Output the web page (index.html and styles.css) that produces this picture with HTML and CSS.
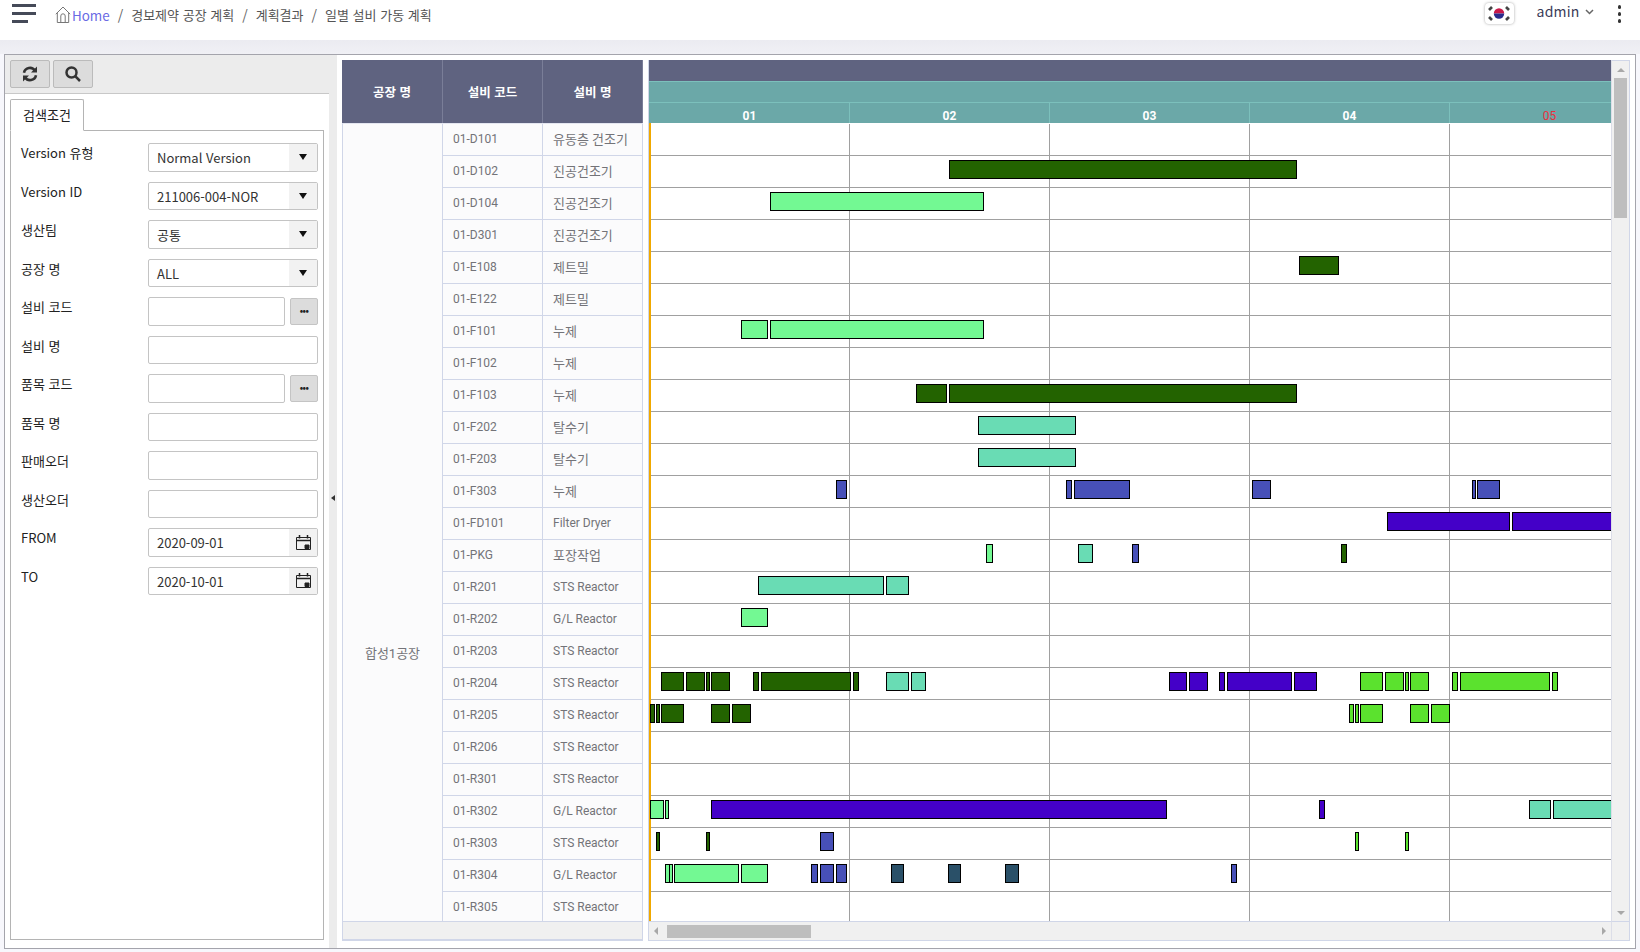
FILE: index.html
```html
<!DOCTYPE html>
<html lang="ko">
<head>
    <meta charset="UTF-8">
    <title>일별 설비 가동 계획</title>
    <link rel="stylesheet" href="styles.css">
</head>
<body>
<div class="page">
    <!-- 상단 바 -->
    <header class="topbar">
        <div class="burger"><span></span><span></span><span class="short"></span></div>
        <nav class="crumbs">
            <svg class="home-icon" width="16" height="17" viewBox="0 0 16 17" fill="none" stroke="#777" stroke-width="1"><path d="M.8 8.2 8 1l7.2 7.2"/><path d="M2.3 6.8v9.7h11.4V6.8"/><path d="M5.8 16.5V10a2.2 2.2 0 0 1 4.400 0v6.500"/></svg>
            <a class="home-link">Home</a>
            <span class="sep">/</span><span>경보제약 공장 계획</span>
            <span class="sep">/</span><span>계획결과</span>
            <span class="sep">/</span><span>일별 설비 가동 계획</span>
        </nav>
        <div class="top-right">
            <div class="flag">
                <svg width="24" height="17" viewBox="0 0 24 17">
                    <path d="M6.800 8.500a5.200 5.200 0 0 1 10.400 0z" fill="#c8184a"/>
                    <path d="M17.200 8.500a5.200 5.200 0 0 1-10.400 0z" fill="#2a2a8c"/>
                    <g fill="none" stroke="#444" stroke-width="2.600"><path d="M2 5 5 2"/><path d="M19 2l3 3"/><path d="M2 12l3 3"/><path d="M19 15l3-3"/></g>
                </svg>
            </div>
            <span class="user">admin</span>
            <svg class="chevron" width="9" height="6" viewBox="0 0 9 6" fill="none" stroke="#666" stroke-width="1.500"><path d="M1 1l3.500 3.500L8 1"/></svg>
            <div class="dots"><i></i><i></i><i></i></div>
        </div>
    </header>

    <main class="main">
        <!-- 검색 패널 -->
        <aside class="side">
            <div class="toolbar">
                <button class="tool-btn">
                    <svg width="16" height="16" viewBox="0 0 16 16" fill="none" stroke="#333" stroke-width="2.600"><path d="M2 6.800A6 6 0 0 1 13 4.800"/><path d="M14 9.200A6 6 0 0 1 3 11.200"/><path d="M15 .5v6h-6z" fill="#333" stroke="none"/><path d="M1 15.500v-6h6z" fill="#333" stroke="none"/></svg>
                </button>
                <button class="tool-btn">
                    <svg width="16" height="16" viewBox="0 0 16 16" fill="none" stroke="#333" stroke-width="2.500"><circle cx="6.500" cy="6.500" r="5"/><path d="M10.200 10.200 15 15"/></svg>
                </button>
            </div>
            <div class="tab-area">
                <div class="tab">검색조건</div>
                <div class="tab-panel">
                    <form class="search-form">
                        <label>Version 유형</label>
                        <div class="field"><span class="value">Normal Version</span><span class="addon"><i class="caret"></i></span></div>
                        <label>Version ID</label>
                        <div class="field"><span class="value">211006-004-NOR</span><span class="addon"><i class="caret"></i></span></div>
                        <label>생산팀</label>
                        <div class="field"><span class="value">공통</span><span class="addon"><i class="caret"></i></span></div>
                        <label>공장 명</label>
                        <div class="field"><span class="value">ALL</span><span class="addon"><i class="caret"></i></span></div>
                        <label>설비 코드</label>
                        <div class="field-pair"><div class="field"></div><span class="more-btn">•••</span></div>
                        <label>설비 명</label>
                        <div class="field"></div>
                        <label>품목 코드</label>
                        <div class="field-pair"><div class="field"></div><span class="more-btn">•••</span></div>
                        <label>품목 명</label>
                        <div class="field"></div>
                        <label>판매오더</label>
                        <div class="field"></div>
                        <label>생산오더</label>
                        <div class="field"></div>
                        <label>FROM</label>
                        <div class="field"><span class="value">2020-09-01</span><span class="addon">
                            <svg width="15" height="15" viewBox="0 0 15 15" fill="none" stroke="#222"><path d="M.5 2.500h14v12H.5z"/><path d="M.5 5.500h14" stroke-width="1.500"/><path d="M3.500 0v3.500M11.500 0v3.500" stroke-width="1.500"/><path d="M9 10h4v3.500H9z" fill="#222"/></svg>
                        </span></div>
                        <label>TO</label>
                        <div class="field"><span class="value">2020-10-01</span><span class="addon">
                            <svg width="15" height="15" viewBox="0 0 15 15" fill="none" stroke="#222"><path d="M.5 2.500h14v12H.5z"/><path d="M.5 5.500h14" stroke-width="1.500"/><path d="M3.500 0v3.500M11.500 0v3.500" stroke-width="1.500"/><path d="M9 10h4v3.500H9z" fill="#222"/></svg>
                        </span></div>
                    </form>
                </div>
            </div>
        </aside>
        <div class="splitter"><i></i></div>

        <!-- 그리드 + 간트 -->
        <section class="content">
            <div class="equip-table">
                <div class="equip-head"><div>공장 명</div><div>설비 코드</div><div>설비 명</div></div>
                <div class="equip-body">
                    <div class="plant-cell">합성1공장</div>
                    <div class="equip-rows">
                        <div class="equip-row"><span>01-D101</span><span class="ko">유동층 건조기</span></div>
                        <div class="equip-row"><span>01-D102</span><span class="ko">진공건조기</span></div>
                        <div class="equip-row"><span>01-D104</span><span class="ko">진공건조기</span></div>
                        <div class="equip-row"><span>01-D301</span><span class="ko">진공건조기</span></div>
                        <div class="equip-row"><span>01-E108</span><span class="ko">제트밀</span></div>
                        <div class="equip-row"><span>01-E122</span><span class="ko">제트밀</span></div>
                        <div class="equip-row"><span>01-F101</span><span class="ko">누제</span></div>
                        <div class="equip-row"><span>01-F102</span><span class="ko">누제</span></div>
                        <div class="equip-row"><span>01-F103</span><span class="ko">누제</span></div>
                        <div class="equip-row"><span>01-F202</span><span class="ko">탈수기</span></div>
                        <div class="equip-row"><span>01-F203</span><span class="ko">탈수기</span></div>
                        <div class="equip-row"><span>01-F303</span><span class="ko">누제</span></div>
                        <div class="equip-row"><span>01-FD101</span><span>Filter Dryer</span></div>
                        <div class="equip-row"><span>01-PKG</span><span class="ko">포장작업</span></div>
                        <div class="equip-row"><span>01-R201</span><span>STS Reactor</span></div>
                        <div class="equip-row"><span>01-R202</span><span>G/L Reactor</span></div>
                        <div class="equip-row"><span>01-R203</span><span>STS Reactor</span></div>
                        <div class="equip-row"><span>01-R204</span><span>STS Reactor</span></div>
                        <div class="equip-row"><span>01-R205</span><span>STS Reactor</span></div>
                        <div class="equip-row"><span>01-R206</span><span>STS Reactor</span></div>
                        <div class="equip-row"><span>01-R301</span><span>STS Reactor</span></div>
                        <div class="equip-row"><span>01-R302</span><span>G/L Reactor</span></div>
                        <div class="equip-row"><span>01-R303</span><span>STS Reactor</span></div>
                        <div class="equip-row"><span>01-R304</span><span>G/L Reactor</span></div>
                        <div class="equip-row"><span>01-R305</span><span>STS Reactor</span></div>
                    </div>
                </div>
                <div class="left-scroll"></div>
            </div>

            <div class="gantt">
                <div class="gantt-view">
                    <div class="gantt-head">
                        <div class="head-band"></div>
                        <div class="head-teal"></div>
                        <div class="head-days">
                            <div>01</div><div>02</div><div>03</div><div>04</div><div class="holiday">05</div>
                        </div>
                    </div>
                    <div class="gantt-body">
                        <div class="today-line"></div>
                        <div class="g-row"></div>
                        <div class="g-row">
                            <i class="bar d" style="left:300px;width:348px"></i>
                        </div>
                        <div class="g-row">
                            <i class="bar l" style="left:121px;width:214px"></i>
                        </div>
                        <div class="g-row"></div>
                        <div class="g-row">
                            <i class="bar d" style="left:650px;width:40px"></i>
                        </div>
                        <div class="g-row"></div>
                        <div class="g-row">
                            <i class="bar l" style="left:92px;width:27px"></i>
                            <i class="bar l" style="left:121px;width:214px"></i>
                        </div>
                        <div class="g-row"></div>
                        <div class="g-row">
                            <i class="bar d" style="left:267px;width:31px"></i>
                            <i class="bar d" style="left:300px;width:348px"></i>
                        </div>
                        <div class="g-row">
                            <i class="bar t" style="left:329px;width:98px"></i>
                        </div>
                        <div class="g-row">
                            <i class="bar t" style="left:329px;width:98px"></i>
                        </div>
                        <div class="g-row">
                            <i class="bar b" style="left:187px;width:11px"></i>
                            <i class="bar b" style="left:417px;width:6px"></i>
                            <i class="bar b" style="left:425px;width:56px"></i>
                            <i class="bar b" style="left:603px;width:19px"></i>
                            <i class="bar b" style="left:823px;width:4px"></i>
                            <i class="bar b" style="left:828px;width:23px"></i>
                        </div>
                        <div class="g-row">
                            <i class="bar v" style="left:738px;width:123px"></i>
                            <i class="bar v" style="left:863px;width:160px"></i>
                        </div>
                        <div class="g-row">
                            <i class="bar l" style="left:337px;width:7px"></i>
                            <i class="bar t" style="left:429px;width:15px"></i>
                            <i class="bar b" style="left:483px;width:7px"></i>
                            <i class="bar d" style="left:692px;width:6px"></i>
                        </div>
                        <div class="g-row">
                            <i class="bar t" style="left:109px;width:126px"></i>
                            <i class="bar t" style="left:237px;width:23px"></i>
                        </div>
                        <div class="g-row">
                            <i class="bar l" style="left:92px;width:27px"></i>
                        </div>
                        <div class="g-row"></div>
                        <div class="g-row">
                            <i class="bar d" style="left:12px;width:23px"></i>
                            <i class="bar d" style="left:37px;width:19px"></i>
                            <i class="bar d" style="left:57px;width:4px"></i>
                            <i class="bar d" style="left:62px;width:19px"></i>
                            <i class="bar d" style="left:104px;width:6px"></i>
                            <i class="bar d" style="left:112px;width:90px"></i>
                            <i class="bar d" style="left:204px;width:6px"></i>
                            <i class="bar t" style="left:237px;width:23px"></i>
                            <i class="bar t" style="left:262px;width:15px"></i>
                            <i class="bar v" style="left:520px;width:18px"></i>
                            <i class="bar v" style="left:540px;width:19px"></i>
                            <i class="bar v" style="left:570px;width:6px"></i>
                            <i class="bar v" style="left:578px;width:65px"></i>
                            <i class="bar v" style="left:645px;width:23px"></i>
                            <i class="bar g" style="left:711px;width:23px"></i>
                            <i class="bar g" style="left:736px;width:19px"></i>
                            <i class="bar g" style="left:756px;width:4px"></i>
                            <i class="bar g" style="left:761px;width:19px"></i>
                            <i class="bar g" style="left:803px;width:6px"></i>
                            <i class="bar g" style="left:811px;width:90px"></i>
                            <i class="bar g" style="left:903px;width:6px"></i>
                        </div>
                        <div class="g-row">
                            <i class="bar d" style="left:1px;width:5px"></i>
                            <i class="bar d" style="left:7px;width:4px"></i>
                            <i class="bar d" style="left:12px;width:23px"></i>
                            <i class="bar d" style="left:62px;width:19px"></i>
                            <i class="bar d" style="left:83px;width:19px"></i>
                            <i class="bar g" style="left:700px;width:5px"></i>
                            <i class="bar g" style="left:706px;width:4px"></i>
                            <i class="bar g" style="left:711px;width:23px"></i>
                            <i class="bar g" style="left:761px;width:19px"></i>
                            <i class="bar g" style="left:782px;width:19px"></i>
                        </div>
                        <div class="g-row"></div>
                        <div class="g-row"></div>
                        <div class="g-row">
                            <i class="bar l" style="left:1px;width:14px"></i>
                            <i class="bar l" style="left:16px;width:4px"></i>
                            <i class="bar v" style="left:62px;width:456px"></i>
                            <i class="bar v" style="left:670px;width:6px"></i>
                            <i class="bar t" style="left:880px;width:22px"></i>
                            <i class="bar t" style="left:904px;width:100px"></i>
                        </div>
                        <div class="g-row">
                            <i class="bar d" style="left:7px;width:4px"></i>
                            <i class="bar d" style="left:57px;width:4px"></i>
                            <i class="bar b" style="left:171px;width:14px"></i>
                            <i class="bar g" style="left:706px;width:4px"></i>
                            <i class="bar g" style="left:756px;width:4px"></i>
                        </div>
                        <div class="g-row">
                            <i class="bar l" style="left:16px;width:5px"></i>
                            <i class="bar l" style="left:20px;width:4px"></i>
                            <i class="bar l" style="left:25px;width:65px"></i>
                            <i class="bar l" style="left:92px;width:27px"></i>
                            <i class="bar b" style="left:162px;width:7px"></i>
                            <i class="bar b" style="left:171px;width:14px"></i>
                            <i class="bar b" style="left:187px;width:11px"></i>
                            <i class="bar s" style="left:242px;width:13px"></i>
                            <i class="bar s" style="left:299px;width:13px"></i>
                            <i class="bar s" style="left:356px;width:14px"></i>
                            <i class="bar b" style="left:582px;width:6px"></i>
                        </div>
                        <div class="g-row"></div>
                    </div>
                </div>
                <div class="v-scroll">
                    <i class="arrow up"></i>
                    <div class="v-thumb"></div>
                    <i class="arrow down"></i>
                </div>
                <div class="h-scroll">
                    <i class="arrow left"></i>
                    <div class="h-thumb"></div>
                    <i class="arrow right"></i>
                </div>
                <div class="corner"></div>
            </div>
        </section>
    </main>
</div>
</body>
</html>
```

FILE: styles.css
```css
* {
    box-sizing: border-box;
}
body {
    margin: 0;
    font-family: "Noto Sans CJK KR", "Noto Sans", sans-serif;
    font-size: 13px;
    background-color: #f7f7fc;
    color: #333;
}
.page {
    display: flex;
    flex-direction: column;
    height: 952px;
    overflow: hidden;
    background: linear-gradient(#ebebf1 40px, #f0f0f5 54px, #f7f7fc 54px);
}

/* top bar */
.topbar {
    display: flex;
    align-items: flex-start;
    height: 40px;
    flex: none;
    background: white;
    padding-left: 12px;
    position: relative;
}
.burger {
    display: flex;
    flex-direction: column;
    gap: 5.5px;
    width: 24px;
    margin-top: 4px;
}
.burger span {
    display: block;
    height: 2.5px;
    background-color: #454a58;
}
.burger .short {
    width: 16px;
}
.crumbs {
    display: flex;
    align-items: center;
    height: 29px;
    margin-left: 19px;
    font-size: 13px;
    color: #555;
    white-space: nowrap;
}
.home-icon {
    margin-right: 1px;
}
.home-link {
    font-size: 13.4px;
    color: #6a6ae4;
}
.sep {
    margin: 0 8px;
    font-size: 14px;
    color: #666;
}
.top-right {
    display: flex;
    align-items: flex-start;
    margin-left: auto;
}
.flag {
    display: flex;
    align-items: center;
    justify-content: center;
    width: 29px;
    height: 21px;
    margin-top: 3px;
    background: white;
    border-radius: 4px;
    box-shadow: 0 0 3px rgba(0,0,0,0.35);
}
.user {
    margin-left: 23px;
    font-size: 14px;
    line-height: 22px;
    color: #3b3b58;
    letter-spacing: 0.2px;
}
.chevron {
    margin: 9px 0 0 5px;
}
.dots {
    display: flex;
    flex-direction: column;
    gap: 3.5px;
    margin: 5px 19px 0 24px;
}
.dots i {
    width: 3.5px;
    height: 3.5px;
    border-radius: 50%;
    background-color: #333;
}

/* layout */
.main {
    display: flex;
    height: 895px;
    margin: 14px 4px 3px 4px;
    border: 1px solid #a4a4ac;
    background: white;
}
.side {
    display: flex;
    flex-direction: column;
    width: 324px;
    flex: none;
}
.splitter {
    display: flex;
    align-items: center;
    justify-content: center;
    width: 8px;
    flex: none;
    background-color: #ececec;
    padding-bottom: 8px;
}
.splitter i {
    border: 3px solid transparent;
    border-right: 4px solid #333;
    border-left: 0;
}

/* search panel */
.toolbar {
    display: flex;
    gap: 3px;
    height: 39px;
    padding: 5px;
    background-color: #ececec;
    border-bottom: 1px solid #c8c8c8;
}
.tool-btn {
    display: flex;
    align-items: center;
    justify-content: center;
    width: 40px;
    height: 28px;
    padding: 0;
    background-color: #dcdcdc;
    border: 1px solid #bbb;
    border-radius: 2px;
}
.tab-area {
    flex: 1;
    display: flex;
    flex-direction: column;
    padding: 5px 5px 8px 5px;
}
.tab {
    width: 74px;
    height: 32px;
    margin-bottom: -1px;
    position: relative;
    line-height: 29px;
    text-align: center;
    color: #222;
    background: white;
    border: 1px solid #b4b4b4;
    border-bottom-color: white;
    border-radius: 2px 2px 0 0;
}
.tab-panel {
    flex: 1;
    border: 1px solid #b4b4b4;
    padding: 12px 5px 0 10px;
}
.search-form {
    display: grid;
    grid-template-columns: 127px 170px;
    grid-auto-rows: 38.5px;
}
.search-form label {
    line-height: 20px;
    color: #222;
}
.field {
    display: flex;
    align-items: stretch;
    height: 28.5px;
    background: white;
    border: 1px solid #c4c4c4;
    border-radius: 2px;
}
.value {
    flex: 1;
    padding-left: 8px;
    line-height: 27px;
    color: #333;
}
.addon {
    display: flex;
    align-items: center;
    justify-content: center;
    width: 28px;
    background-color: #f2f2f2;
}
.caret {
    border: 4px solid transparent;
    border-top: 6px solid #111;
    border-bottom: 0;
}
.field-pair {
    display: flex;
    gap: 5px;
}
.field-pair .field {
    flex: 1;
}
.more-btn {
    width: 28px;
    height: 27px;
    line-height: 23px;
    margin-top: 1px;
    text-align: center;
    font-size: 9px;
    font-weight: 700;
    letter-spacing: -0.5px;
    color: #222;
    background-color: #dcdcdc;
    border: 1px solid #c4c4c4;
    border-radius: 2px;
}

/* equipment table */
.content {
    flex: 1;
    display: flex;
    gap: 5px;
    padding: 5px 5px 7px 5px;
    min-width: 0;
}
.equip-table {
    display: flex;
    flex-direction: column;
    width: 301px;
    flex: none;
    border-bottom: 2px solid #d0d6e8;
}
.equip-head {
    display: flex;
    height: 63px;
    flex: none;
    background-color: #5f6380;
    color: white;
    font-weight: 700;
    font-size: 12.5px;
}
.equip-head div {
    width: 100px;
    padding-top: 1px;
    line-height: 62px;
    text-align: center;
    border-right: 1px solid #7a7e98;
}
.equip-head div:first-child {
    width: 101px;
}
.equip-body {
    flex: 1;
    display: flex;
    overflow: hidden;
    background-color: #fbfbfc;
    color: #737378;
    font-family: Roboto, "Noto Sans CJK KR", sans-serif;
    font-size: 12px;
    border-top: 1px solid #e4e6f0;
    border-left: 1px solid #d0d6e8;
}
.plant-cell {
    width: 100px;
    flex: none;
    padding-top: 519px;
    text-align: center;
    font-size: 13px;
    border-right: 1px solid #d0d6e8;
}
.equip-rows {
    flex: 1;
}
.equip-row {
    display: flex;
    height: 32px;
    line-height: 31px;
    border-bottom: 1px solid #d0d6e8;
}
.equip-row span {
    width: 100px;
    padding-left: 10px;
    border-right: 1px solid #d0d6e8;
    white-space: nowrap;
}
.equip-row .ko {
    font-size: 13px;
}
.left-scroll {
    height: 18px;
    flex: none;
    background-color: #f0f0f0;
    border-top: 1px solid #d0d6e8;
    border-left: 1px solid #d0d6e8;
    border-right: 1px solid #d0d6e8;
}

/* gantt */
.gantt {
    flex: 1;
    display: grid;
    grid-template-columns: 1fr 18px;
    grid-template-rows: 1fr 19px;
    min-width: 0;
    border-left: 1px solid #d0d6e8;
    border-bottom: 1px solid #d0d6e8;
    border-right: 1px solid #d0d6e8;
}
.gantt-view {
    display: flex;
    flex-direction: column;
    min-width: 0;
    overflow: hidden;
}
.gantt-head {
    flex: none;
    height: 63px;
    color: white;
    font-family: Roboto, sans-serif;
    font-weight: 700;
    font-size: 12px;
    background-color: #6ba8a8;
}
.head-band {
    height: 21px;
    background-color: #5f6380;
}
.head-teal {
    height: 21px;
    border-top: 1px solid #7cc0bc;
}
.head-days {
    display: flex;
    height: 21px;
    padding-left: 1px;
    border-top: 1px solid #7cc0bc;
}
.head-days div {
    width: 200px;
    flex: none;
    padding-top: 4px;
    line-height: 18px;
    text-align: center;
    border-right: 1px solid #7cc0bc;
}
.head-days .holiday {
    color: #ea2f3c;
    font-weight: 400;
}
.gantt-body {
    flex: 1;
    position: relative;
    overflow: hidden;
    padding-top: 1px;
    background: white;
}
.today-line {
    position: absolute;
    left: 0;
    top: 0;
    bottom: 0;
    width: 2px;
    z-index: 1;
    background-color: #f0a800;
}
.g-row {
    position: relative;
    height: 32px;
    border-bottom: 1px solid #a0a0a0;
    background-image: linear-gradient(to left, #a0a0a0 1px, transparent 1px);
    background-size: 200px 100%;
    background-position-x: 1px;
}
.bar {
    position: absolute;
    top: 4px;
    height: 19px;
    z-index: 2;
    border: 1px solid black;
}
.bar.d { background-color: #236300; }
.bar.l { background-color: #73f993; }
.bar.t { background-color: #69dcb4; }
.bar.b { background-color: #4750b8; }
.bar.v { background-color: #4400c8; }
.bar.g { background-color: #5be22e; }
.bar.s { background-color: #2a5068; }

/* scrollbars */
.v-scroll {
    grid-column: 2;
    grid-row: 1;
    display: flex;
    flex-direction: column;
    align-items: center;
    background-color: #f0f0f0;
    border-left: 1px solid #dcdee8;
    border-top: 1px solid #d0d6e8;
    padding-top: 7px;
}
.v-thumb {
    width: 13px;
    height: 140px;
    margin-top: 6px;
    background-color: #bebebe;
}
.h-scroll {
    grid-column: 1;
    grid-row: 2;
    display: flex;
    align-items: center;
    padding-left: 5px;
    padding-right: 5px;
    background-color: #f0f0f0;
    border-top: 1px solid #d0d6e8;
}
.h-thumb {
    width: 144px;
    height: 13px;
    margin-left: 9px;
    background-color: #bebebe;
}
.corner {
    grid-column: 2;
    grid-row: 2;
    background-color: #f0f0f0;
    border-top: 1px solid #d0d6e8;
    border-left: 1px solid #dcdee8;
}
.arrow {
    display: block;
    width: 0;
    height: 0;
    border: 4px solid transparent;
}
.arrow.up {
    border-top: 0;
    border-bottom: 4px solid #a8a8a8;
}
.arrow.down {
    margin-top: auto;
    margin-bottom: 6px;
    border-bottom: 0;
    border-top: 4px solid #a8a8a8;
}
.arrow.left {
    border-left: 0;
    border-right: 4px solid #a8a8a8;
}
.arrow.right {
    margin-left: auto;
    border-right: 0;
    border-left: 4px solid #a8a8a8;
}
```
